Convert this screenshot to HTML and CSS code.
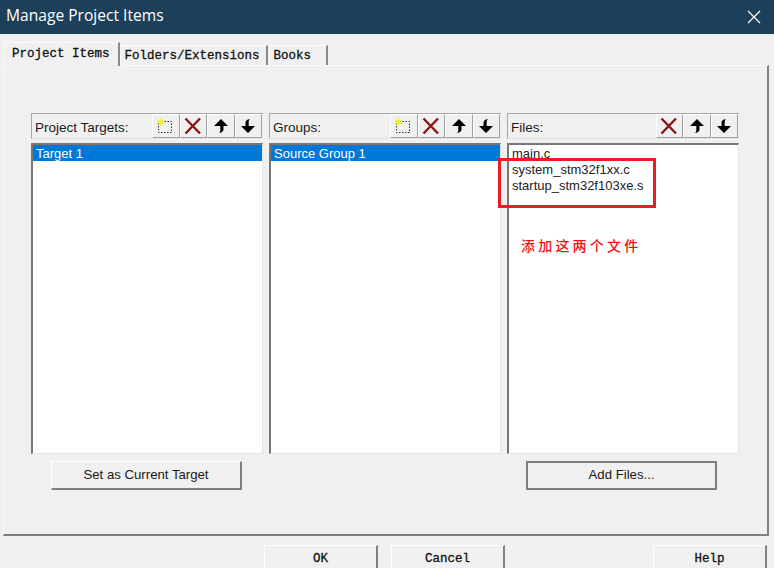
FILE: index.html
```html
<!doctype html>
<html>
  <head>
    <meta charset="utf-8">
    <title>Manage Project Items</title>
    <link rel="stylesheet" href="styles.css">
  </head>
  <body>
    <div class="window">
      <div class="titlebar">
        <span class="title">Manage Project Items</span>
        <svg class="close" width="14" height="14" viewBox="0 0 14 14"><path d="M1 1L13 13M13 1L1 13" stroke="#fff" stroke-width="1.2" fill="none"/></svg>
      </div>

      <div class="tabs">
        <div class="tab active">Project Items</div>
        <div class="tab">Folders/Extensions</div>
        <div class="tab books">Books</div>
      </div>

      <div class="panel">
        <div class="columns">
          <div class="pane">
            <div class="pane-head">
              <span class="pane-label">Project Targets:</span>
              <div class="tools">
                <button class="tool"><svg width="20" height="20" viewBox="0 0 20 20"><use href="#i-new"/></svg></button>
                <button class="tool"><svg width="20" height="20" viewBox="0 0 20 20"><use href="#i-del"/></svg></button>
                <button class="tool"><svg width="20" height="20" viewBox="0 0 20 20"><use href="#i-up"/></svg></button>
                <button class="tool"><svg width="20" height="20" viewBox="0 0 20 20"><use href="#i-down"/></svg></button>
              </div>
            </div>
            <ul class="list">
              <li class="selected">Target 1</li>
            </ul>
            <button class="btn">Set as Current Target</button>
          </div>

          <div class="pane">
            <div class="pane-head">
              <span class="pane-label">Groups:</span>
              <div class="tools">
                <button class="tool"><svg width="20" height="20" viewBox="0 0 20 20"><use href="#i-new"/></svg></button>
                <button class="tool"><svg width="20" height="20" viewBox="0 0 20 20"><use href="#i-del"/></svg></button>
                <button class="tool"><svg width="20" height="20" viewBox="0 0 20 20"><use href="#i-up"/></svg></button>
                <button class="tool"><svg width="20" height="20" viewBox="0 0 20 20"><use href="#i-down"/></svg></button>
              </div>
            </div>
            <ul class="list">
              <li class="selected">Source Group 1</li>
            </ul>
          </div>

          <div class="pane">
            <div class="pane-head">
              <span class="pane-label">Files:</span>
              <div class="tools">
                <button class="tool"><svg width="20" height="20" viewBox="0 0 20 20"><use href="#i-del"/></svg></button>
                <button class="tool"><svg width="20" height="20" viewBox="0 0 20 20"><use href="#i-up"/></svg></button>
                <button class="tool"><svg width="20" height="20" viewBox="0 0 20 20"><use href="#i-down"/></svg></button>
              </div>
            </div>
            <ul class="list">
              <li>main.c</li>
              <li>system_stm32f1xx.c</li>
              <li>startup_stm32f103xe.s</li>
            </ul>
            <button class="btn default">Add Files...</button>
          </div>
        </div>
      </div>

      <div class="footer">
        <button class="foot-btn">OK</button>
        <button class="foot-btn">Cancel</button>
        <button class="foot-btn help">Help</button>
      </div>

      <div class="mark"></div>
      <div class="note">添加这两个文件</div>
    </div>

    <svg class="defs" width="0" height="0">
      <defs>
        <g id="i-new">
          <rect x="2.500" y="5.500" width="13" height="11" fill="none" stroke="#333" stroke-width="1" stroke-dasharray="1.5 1.5"/>
          <path d="M4.500 1.500L5.700 4.500L9 3.500L6.800 6L9 8.500L5.700 7.500L4.500 10.500L3.300 7.500L0 8.500L2.200 6L0 3.500L3.300 4.500Z" fill="#f2ec3a"/>
        </g>
        <g id="i-del">
          <path d="M1.500 2.500L16 17.500M16 2.500L1.500 17.500" stroke="#8c1414" stroke-width="2.4" fill="none"/>
        </g>
        <g id="i-up">
          <path d="M10 3L17 10H12.500V13C12.500 15 11.500 16.500 8 17C9.300 16 9.300 15 9.300 13V10H3Z" fill="#000"/>
        </g>
        <g id="i-down">
          <path d="M10 17L3 10H7.500V7C7.500 5 8.500 3.500 12 3C10.700 4 10.700 5 10.700 7V10H17Z" fill="#000"/>
        </g>
      </defs>
    </svg>
  </body>
</html>
```

FILE: styles.css
```css
html, body {
  margin: 0;
  padding: 0;
}
body {
  background-color: #f0f0f0;
  color: #1a1a1a;
  font-family: "Liberation Sans", Arial, sans-serif;
  font-size: 13px;
}
button {
  font: inherit;
  color: inherit;
  padding: 0;
}
.defs {
  display: block;
  height: 0;
}

.window {
  position: relative;
  width: 774px;
  height: 568px;
  overflow: hidden;
  background-color: #f0f0f0;
}

.titlebar {
  display: flex;
  align-items: center;
  justify-content: space-between;
  height: 34px;
  padding: 0 13px 0 6px;
  background-color: #1c4059;
  color: #fff;
}
.title {
  font-family: "Open Sans", "Noto Sans", sans-serif;
  font-size: 15.6px;
  margin-top: -5px;
}
.close {
  display: block;
}

.tabs {
  display: flex;
  align-items: flex-end;
  height: 24px;
  margin-top: 8px;
  padding-left: 4px;
  position: relative;
  z-index: 1;
}
.tab {
  height: 20px;
  margin-bottom: 1px;
  padding: 0 6px 0 4px;
  margin-right: 1px;
  border-top: 1px solid #fafafa;
  border-left: 1px solid #fafafa;
  border-right: 2px solid #8a8a8a;
  font-family: "Liberation Mono", monospace;
  font-size: 12.5px;
  line-height: 20px;
  color: #111;
  -webkit-text-stroke: 0.3px #111;
  box-sizing: border-box;
}
.tab.active {
  height: 24px;
  margin-bottom: 0;
  margin-right: 0;
  padding: 0 8px 2px 7px;
  background-color: #f0f0f0;
  line-height: 22px;
}
.tab.books {
  width: 59px;
}

.panel {
  box-sizing: border-box;
  height: 471px;
  margin: -1px 5px 0 3px;
  padding: 47px 28px 0 27px;
  border-top: 1px solid #fafafa;
  border-left: 1px solid #fafafa;
  border-right: 2px solid #808080;
  border-bottom: 2px solid #808080;
}
.columns {
  display: grid;
  grid-template-columns: repeat(3, 232px);
  column-gap: 6px;
}

.pane-head {
  box-sizing: border-box;
  display: flex;
  align-items: center;
  justify-content: space-between;
  height: 26px;
  padding-right: 1px;
  border-top: 1px solid #a8a8a8;
  border-left: 1px solid #a8a8a8;
  border-bottom: 1px solid #e4e4e4;
}
.pane-label {
  padding: 2px 0 0 3px;
  font-size: 13.5px;
}
.tools {
  display: flex;
  gap: 0;
}
.tool {
  box-sizing: border-box;
  display: flex;
  align-items: center;
  justify-content: center;
  width: 27.4px;
  height: 24px;
  background-color: #f0f0f0;
  border: 0;
  border-top: 1px solid #fff;
  border-left: 1px solid #fff;
  border-right: 1px solid #a0a0a0;
  border-bottom: 1px solid #a0a0a0;
}

.list {
  box-sizing: border-box;
  height: 311px;
  margin: 4px 0 0 0;
  padding: 0;
  list-style-type: none;
  background-color: #fff;
  border-top: 2px solid #777;
  border-left: 2px solid #777;
  border-right: 1px solid #e4e4e4;
  border-bottom: 1px solid #e4e4e4;
}
.list li {
  height: 16px;
  padding-left: 3px;
  line-height: 18px;
  color: #222;
}
.list li.selected {
  background-color: #0078d7;
  color: #fff;
}

.btn {
  box-sizing: border-box;
  display: block;
  width: 191px;
  height: 29px;
  margin: 7px 0 0 20px;
  padding-bottom: 2px;
  background-color: #f0f0f0;
  border: 0;
  border-top: 1px solid #fff;
  border-left: 1px solid #fff;
  border-right: 2px solid #808080;
  border-bottom: 2px solid #808080;
  font-size: 13.2px;
}
.btn.default {
  margin-left: 19px;
  border-top: 2px solid #808080;
  border-left: 2px solid #808080;
}

.footer {
  display: flex;
  margin-top: 9px;
  padding-left: 264px;
}
.foot-btn {
  box-sizing: border-box;
  flex: none;
  width: 114px;
  height: 30px;
  margin-right: 13px;
  padding-bottom: 4px;
  background-color: #f0f0f0;
  border: 0;
  border-top: 1px solid #fff;
  border-left: 1px solid #fff;
  border-right: 2px solid #808080;
  font-family: "Liberation Mono", monospace;
  font-size: 12.5px;
  color: #111;
  -webkit-text-stroke: 0.3px #111;
}
.foot-btn.help {
  margin-left: 135px;
  margin-right: 0;
}

/* red annotation drawn on top of the dialog */
.mark {
  position: absolute;
  left: 498px;
  top: 158px;
  width: 152px;
  height: 44px;
  border: 3px solid #ed1c24;
}
.note {
  position: absolute;
  left: 521px;
  top: 236px;
  font-family: "Noto Sans CJK SC", sans-serif;
  font-size: 14px;
  font-weight: 500;
  line-height: 18px;
  letter-spacing: 3.2px;
  color: #f01010;
}
```
